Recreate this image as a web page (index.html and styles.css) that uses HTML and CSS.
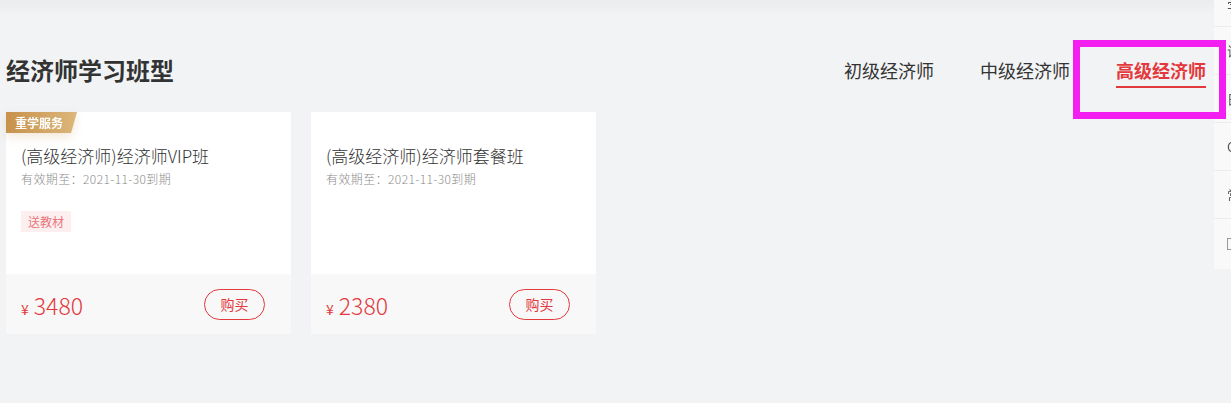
FILE: index.html
```html
<!DOCTYPE html>
<html lang="zh-CN">
<head>
<meta charset="utf-8">
<title>经济师学习班型</title>
<link rel="stylesheet" href="styles.css">
</head>
<body>
<div class="page">
  <div class="header">
    <h2 class="title">经济师学习班型</h2>
    <div class="tabs">
      <span class="tab">初级经济师</span>
      <span class="tab">中级经济师</span>
      <span class="tab active">高级经济师</span>
    </div>
  </div>
  <div class="cards">
    <div class="card">
      <div class="badge-wrap"><span class="badge">重学服务</span></div>
      <div class="card-body">
        <div class="card-title">(高级经济师)经济师VIP班</div>
        <div class="card-sub">有效期至：2021-11-30到期</div>
        <span class="tag">送教材</span>
      </div>
      <div class="card-foot">
        <div class="price"><span class="yen">¥</span><span class="num">3480</span></div>
        <span class="buy">购买</span>
      </div>
    </div>
    <div class="card">
      <div class="card-body">
        <div class="card-title">(高级经济师)经济师套餐班</div>
        <div class="card-sub">有效期至：2021-11-30到期</div>
      </div>
      <div class="card-foot">
        <div class="price"><span class="yen">¥</span><span class="num">2380</span></div>
        <span class="buy">购买</span>
      </div>
    </div>
  </div>
</div>
<div class="sidebar">
  <div class="side-item first">字</div>
  <div class="side-item">试</div>
  <div class="side-item">日</div>
  <div class="side-item">C</div>
  <div class="side-item">常</div>
  <div class="side-item last"><span class="side-icon"></span></div>
</div>
<div class="highlight"></div>
</body>
</html>
```
FILE: styles.css
```css
html, body {
  margin: 0;
  padding: 0;
}
body {
  width: 1231px;
  height: 403px;
  overflow: hidden;
  background-color: #f2f3f5;
  background-image: linear-gradient(to bottom, #eaecee, #f2f3f5);
  background-size: 100% 16px;
  background-repeat: no-repeat;
  font-family: "Noto Sans CJK SC", "Noto Sans", sans-serif;
  color: #333;
}
.page {
  padding: 0 25px 0 6px;
}
.header {
  display: flex;
  justify-content: space-between;
  align-items: flex-start;
  height: 112px;
  padding-top: 54px;
  box-sizing: border-box;
}
.title {
  margin: 0;
  font-size: 24px;
  line-height: 32px;
  font-weight: bold;
  color: #333;
}
.tabs {
  display: flex;
  gap: 46px;
  margin-top: 4px;
}
.tab {
  font-size: 18px;
  line-height: 24px;
  padding-bottom: 4px;
  border-bottom: 2px solid transparent;
  color: #333;
}
.tab.active {
  color: #e4393c;
  font-weight: bold;
  border-bottom-color: #e4393c;
}
.cards {
  display: flex;
  gap: 20px;
}
.card {
  position: relative;
  width: 285px;
  background: #fff;
}
.badge-wrap {
  position: absolute;
  left: 0;
  top: 0;
  filter: drop-shadow(0 4px 5px rgba(200, 150, 80, 0.22));
}
.badge {
  display: block;
  height: 21px;
  line-height: 21px;
  padding: 0 14px 0 9px;
  font-size: 12px;
  font-weight: bold;
  color: #fff;
  background: linear-gradient(90deg, #c7924b, #dcb67b);
  clip-path: polygon(0 0, 100% 0, calc(100% - 6px) 100%, 0 100%);
}
.card-body {
  height: 162px;
  box-sizing: border-box;
  padding: 33px 15px 0;
}
.card-title {
  font-size: 17px;
  line-height: 22px;
  font-weight: 300;
  color: #333;
}
.card-sub {
  margin-top: 2px;
  font-size: 12px;
  line-height: 20px;
  font-weight: 300;
  letter-spacing: 0.4px;
  color: #8c8c8c;
}
.tag {
  display: inline-block;
  margin-top: 22px;
  height: 21px;
  line-height: 21px;
  padding: 0 7px;
  font-size: 12px;
  color: #e8767a;
  background: #fdeff0;
}
.card-foot {
  height: 60px;
  background: #f8f8f8;
  display: flex;
  align-items: center;
  justify-content: space-between;
  padding: 0 26px 0 15px;
}
.price {
  color: #e4393c;
  display: flex;
  align-items: baseline;
  margin-top: 2px;
}
.yen {
  font-size: 14px;
  margin-right: 5px;
}
.num {
  font-size: 23px;
  line-height: 28px;
  font-weight: 300;
}
.buy {
  width: 59px;
  height: 29px;
  line-height: 29px;
  text-align: center;
  border: 1px solid #e4393c;
  border-radius: 16px;
  font-size: 14px;
  color: #e4393c;
}
.sidebar {
  position: fixed;
  left: 1214px;
  top: 0;
  width: 70px;
  background: #f9f9f9;
}
.side-item {
  height: 47px;
  border-bottom: 1px solid #ececec;
  padding-left: 13px;
  font-size: 13px;
  line-height: 47px;
  color: #555;
}
.side-item.first {
  height: 26px;
  line-height: 12px;
}
.side-item.last {
  height: 50px;
  border-bottom: none;
  display: flex;
  align-items: center;
}
.side-icon {
  display: block;
  width: 12px;
  height: 12px;
  border: 1px solid #999;
  box-sizing: border-box;
}
.highlight {
  position: absolute;
  left: 1073px;
  top: 40px;
  width: 153px;
  height: 79px;
  box-sizing: border-box;
  border: 7px solid #f21ff0;
}
```
